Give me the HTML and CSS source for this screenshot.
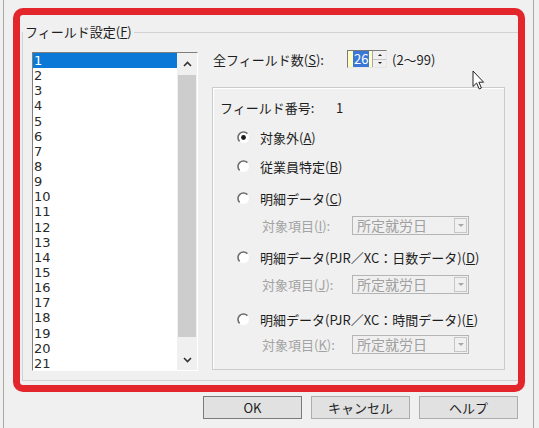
FILE: index.html
```html
<!DOCTYPE html>
<html>
<head>
    <meta charset="utf-8">
    <title>フィールド設定</title>
    <link rel="stylesheet" href="styles.css">
</head>
<body>
    <div class="dialog">
        <fieldset class="group">
            <legend>フィールド設定(<u>F</u>)</legend>
            <div class="group-body">
                <!-- field list -->
                <div class="listbox">
                    <ul class="items">
                        <li class="sel">1</li>
                        <li>2</li>
                        <li>3</li>
                        <li>4</li>
                        <li>5</li>
                        <li>6</li>
                        <li>7</li>
                        <li>8</li>
                        <li>9</li>
                        <li>10</li>
                        <li>11</li>
                        <li>12</li>
                        <li>13</li>
                        <li>14</li>
                        <li>15</li>
                        <li>16</li>
                        <li>17</li>
                        <li>18</li>
                        <li>19</li>
                        <li>20</li>
                        <li>21</li>
                    </ul>
                    <div class="scrollbar">
                        <div class="sb-btn sb-up">
                            <svg width="9" height="6" viewBox="0 0 9 6"><path d="M1 5 L4.5 1.5 L8 5" fill="none" stroke="#333" stroke-width="1.6"/></svg>
                        </div>
                        <div class="sb-thumb"></div>
                        <div class="sb-track"></div>
                        <div class="sb-btn sb-down">
                            <svg width="9" height="6" viewBox="0 0 9 6"><path d="M1 1 L4.5 4.5 L8 1" fill="none" stroke="#333" stroke-width="1.6"/></svg>
                        </div>
                    </div>
                </div>

                <div class="settings">
                    <div class="count-row">
                        <span class="count-label">全フィールド数(<u>S</u>):</span>
                        <div class="spin">
                            <div class="spin-value"><span class="spin-sel">26</span></div>
                            <div class="spin-arrows">
                                <span class="spin-btn"><i class="tri tri-up"></i></span>
                                <span class="spin-btn"><i class="tri tri-down"></i></span>
                            </div>
                        </div>
                        <span class="range">(2～99)</span>
                    </div>

                    <div class="field-box">
                        <div class="field-no">
                            <span class="field-no-label">フィールド番号:</span>
                            <span>1</span>
                        </div>

                        <div class="radio r-a">
                            <svg class="radio-mark" width="13" height="13" viewBox="0 0 13 13">
                                <circle cx="6.5" cy="6.5" r="5.5" fill="#fff"/>
                                <path d="M2.6 10.4 A5.5 5.5 0 0 1 10.4 2.6" fill="none" stroke="#6e6e6e" stroke-width="1.6"/>
                                <circle cx="6.5" cy="6.5" r="2.4" fill="#1a1a1a"/>
                            </svg>
                            <span>対象外(<u>A</u>)</span>
                        </div>

                        <div class="radio r-b">
                            <svg class="radio-mark" width="13" height="13" viewBox="0 0 13 13">
                                <circle cx="6.5" cy="6.5" r="5.5" fill="#fff"/>
                                <path d="M2.6 10.4 A5.5 5.5 0 0 1 10.4 2.6" fill="none" stroke="#6e6e6e" stroke-width="1.6"/>
                            </svg>
                            <span>従業員特定(<u>B</u>)</span>
                        </div>

                        <div class="radio r-c">
                            <svg class="radio-mark" width="13" height="13" viewBox="0 0 13 13">
                                <circle cx="6.5" cy="6.5" r="5.5" fill="#fff"/>
                                <path d="M2.6 10.4 A5.5 5.5 0 0 1 10.4 2.6" fill="none" stroke="#6e6e6e" stroke-width="1.6"/>
                            </svg>
                            <span>明細データ(<u>C</u>)</span>
                        </div>
                        <div class="sub s-i">
                            <span class="sub-label">対象項目(<u>I</u>):</span>
                            <div class="combo"><span class="combo-text">所定就労日</span><span class="combo-btn"><i class="tri tri-down tri-gray"></i></span></div>
                        </div>

                        <div class="radio r-d">
                            <svg class="radio-mark" width="13" height="13" viewBox="0 0 13 13">
                                <circle cx="6.5" cy="6.5" r="5.5" fill="#fff"/>
                                <path d="M2.6 10.4 A5.5 5.5 0 0 1 10.4 2.6" fill="none" stroke="#6e6e6e" stroke-width="1.6"/>
                            </svg>
                            <span>明細データ(PJR／XC：日数データ)(<u>D</u>)</span>
                        </div>
                        <div class="sub s-j">
                            <span class="sub-label">対象項目(<u>J</u>):</span>
                            <div class="combo"><span class="combo-text">所定就労日</span><span class="combo-btn"><i class="tri tri-down tri-gray"></i></span></div>
                        </div>

                        <div class="radio r-e">
                            <svg class="radio-mark" width="13" height="13" viewBox="0 0 13 13">
                                <circle cx="6.5" cy="6.5" r="5.5" fill="#fff"/>
                                <path d="M2.6 10.4 A5.5 5.5 0 0 1 10.4 2.6" fill="none" stroke="#6e6e6e" stroke-width="1.6"/>
                            </svg>
                            <span>明細データ(PJR／XC：時間データ)(<u>E</u>)</span>
                        </div>
                        <div class="sub s-k">
                            <span class="sub-label">対象項目(<u>K</u>):</span>
                            <div class="combo"><span class="combo-text">所定就労日</span><span class="combo-btn"><i class="tri tri-down tri-gray"></i></span></div>
                        </div>
                    </div>
                </div>
            </div>
        </fieldset>

        <div class="buttons">
            <button class="btn btn-default">OK</button>
            <button class="btn">キャンセル</button>
            <button class="btn">ヘルプ</button>
        </div>

        <!-- red marker frame drawn over the group -->
        <div class="mark"></div>

        <svg class="cursor" width="13" height="21" viewBox="0 0 13 21">
            <path d="M1 1 L1 16.5 L4.6 13 L7.2 19 L9.4 18 L6.9 12.2 L11.6 12.2 Z" fill="#fff" stroke="#222" stroke-width="1" stroke-linejoin="round"/>
        </svg>
    </div>
</body>
</html>
```

FILE: styles.css
```css
body {
    margin: 0;
    background: #f0f0f0;
    font-family: "Noto Sans CJK JP", sans-serif;
    font-size: 13px;
    color: #1e1e1e;
}

u {
    text-underline-offset: 1px;
}

/* Dialog window */
.dialog {
    position: relative;
    width: 531px;
    height: 428px;
    margin-left: 3px;
    box-sizing: border-box;
    border-left: 1px solid #a9a9a9;
    border-right: 1px solid #a9a9a9;
    padding-top: 24px;
}

/* Group box */
.group {
    margin: 0 14px 0 18px;
    padding: 10px 13px 9px 9px;
    border: 1px solid #d2d2d2;
    min-inline-size: 0;
}

.group legend {
    padding: 0 2px;
    margin-left: -9px;
    line-height: 16px;
}

.group-body {
    display: flex;
    align-items: flex-start;
    gap: 14px;
}

/* List box */
.listbox {
    display: flex;
    width: 166px;
    height: 319px;
    margin-top: 2px;
    box-sizing: border-box;
    border-top: 1px solid #7f7f7f;
    border-left: 1px solid #7f7f7f;
    border-right: 1px solid #fff;
    border-bottom: 1px solid #fff;
    background: #fff;
}

.items {
    flex: 1;
    list-style: none;
    margin: 0;
    padding: 0;
    font-family: "DejaVu Sans", sans-serif;
    font-size: 13px;
    line-height: 15.15px;
    color: #2a2a2a;
    overflow: hidden;
}

.items li {
    height: 15.15px;
    padding-left: 1px;
}

.items li.sel {
    background: #0a78d7;
    color: #fff;
}

.scrollbar {
    width: 20px;
    display: flex;
    flex-direction: column;
    background: #f0f0f0;
}

.sb-btn {
    display: flex;
    align-items: center;
    justify-content: center;
}

.sb-up {
    height: 22px;
}

.sb-down {
    height: 20px;
}

.sb-thumb {
    height: 262px;
    margin: 0 1px;
    background: #cdcdcd;
}

.sb-track {
    flex: 1;
}

/* Right-hand settings */
.settings {
    flex: 1;
}

.count-row {
    display: flex;
    align-items: center;
    height: 18px;
}

.count-label {
    width: 134px;
    padding-left: 1px;
}

.spin {
    display: flex;
    width: 40px;
    height: 18px;
    box-sizing: border-box;
    border: 1px solid;
    border-color: #7a7a7a #e6e6e6 #e6e6e6 #7a7a7a;
}

.spin-value {
    width: 24px;
    padding-left: 5px;
    box-sizing: border-box;
    background: #ffffc4;
    line-height: 16px;
}

.spin-sel {
    display: inline-block;
    padding: 0 1px;
    background: #3a78d6;
    color: #fff;
}

.spin-arrows {
    flex: 1;
    display: flex;
    flex-direction: column;
    border-left: 1px solid #a6a6a6;
    background: #f0f0f0;
}

.spin-btn {
    flex: 1;
    display: flex;
    align-items: center;
    justify-content: center;
}

.spin-btn + .spin-btn {
    border-top: 1px solid #c4c4c4;
}

.tri {
    width: 0;
    height: 0;
    border-left: 2px solid transparent;
    border-right: 2px solid transparent;
}

.tri-up {
    border-bottom: 2px solid #222;
}

.tri-down {
    border-top: 2px solid #222;
}

.tri-gray {
    border-left-width: 3px;
    border-right-width: 3px;
    border-top: 3px solid #a8a8a8;
}

.range {
    margin-left: 5px;
}

/* Inner field box */
.field-box {
    margin-top: 19px;
    height: 283px;
    box-sizing: border-box;
    border: 1px solid #cbcbcb;
    box-shadow: inset 1px 1px 0 #fff;
    padding: 12px 0 0 7px;
}

.field-no {
    display: flex;
    line-height: 16px;
}

.field-no-label {
    width: 116px;
}

.radio {
    display: flex;
    align-items: center;
    gap: 10px;
    height: 16px;
    margin-left: 17px;
}

.radio-mark {
    flex: none;
}

.r-a { margin-top: 13px; }
.r-b { margin-top: 13px; }
.r-c { margin-top: 16px; }
.r-d { margin-top: 14px; }
.r-e { margin-top: 17px; }

.sub {
    display: flex;
    align-items: center;
    height: 19px;
    margin-left: 42px;
    color: #a3a3a3;
}

.s-i { margin-top: 10px; }
.s-j { margin-top: 10px; }
.s-k { margin-top: 8px; }

.sub-label {
    width: 90px;
}

.combo {
    display: flex;
    width: 117px;
    height: 19px;
    box-sizing: border-box;
    border: 1px solid #b5b5b5;
    font-size: 14px;
    line-height: 17px;
    color: #a0a0a0;
}

.combo-text {
    flex: 1;
    padding-left: 4px;
}

.combo-btn {
    width: 13px;
    margin: 1px;
    box-sizing: border-box;
    border: 1px solid #c6c6c6;
    display: flex;
    align-items: center;
    justify-content: center;
}

/* Dialog buttons */
.buttons {
    display: flex;
    justify-content: flex-end;
    gap: 9px;
    margin: 15px 15px 0 0;
}

.btn {
    width: 99px;
    height: 23px;
    padding: 0;
    border: 1px solid #adadad;
    background: #e1e1e1;
    font-family: inherit;
    font-size: 13px;
    color: #1e1e1e;
}

.btn-default {
    border-color: #7a7a7a;
}

/* Red marker frame */
.mark {
    position: absolute;
    left: 9px;
    top: 8px;
    width: 512px;
    height: 384px;
    box-sizing: border-box;
    border: 7px solid #e2262c;
    border-radius: 10px;
}

.cursor {
    position: absolute;
    left: 468px;
    top: 70px;
}
```
